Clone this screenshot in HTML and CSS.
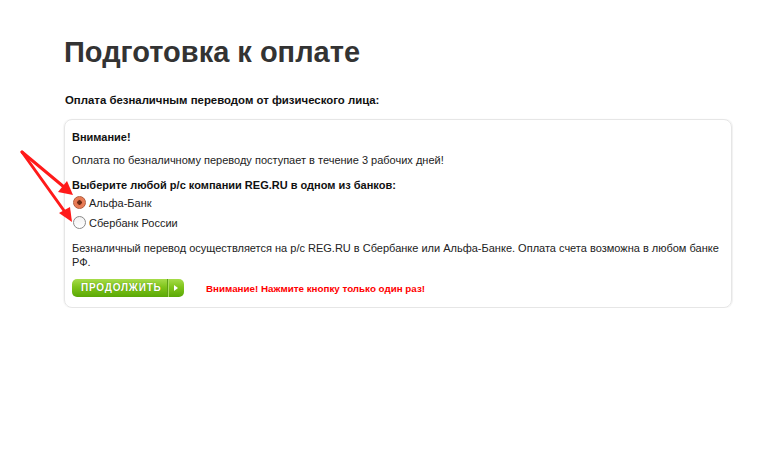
FILE: index.html
```html
<!DOCTYPE html>
<html lang="ru">
<head>
<meta charset="utf-8">
<link rel="stylesheet" href="styles.css">
</head>
<body>
<div class="page">
  <h1 class="title">Подготовка к оплате</h1>
  <p class="subtitle">Оплата безналичным переводом от физического лица:</p>
  <div class="box">
    <p class="strong first">Внимание!</p>
    <p class="text">Оплата по безналичному переводу поступает в течение 3 рабочих дней!</p>
    <p class="strong choose">Выберите любой р/с компании REG.RU в одном из банков:</p>
    <label class="opt"><span class="radio checked"></span><span>Альфа-Банк</span></label>
    <label class="opt"><span class="radio"></span><span>Сбербанк России</span></label>
    <p class="note">Безналичный перевод осуществляется на р/с REG.RU в Сбербанке или Альфа-Банке. Оплата счета возможна в любом банке РФ.</p>
    <div class="actions">
      <span class="btn"><span class="btn-label">ПРОДОЛЖИТЬ</span><span class="btn-arrow"></span></span>
      <span class="warn">Внимание! Нажмите кнопку только один раз!</span>
    </div>
  </div>
</div>
<svg class="arrows" width="100" height="240" viewBox="0 0 100 240">
  <g stroke="#ff1a1a" stroke-width="3" stroke-linecap="round">
    <line x1="22" y1="152" x2="64" y2="187"/>
    <line x1="22" y1="152" x2="65" y2="212"/>
  </g>
  <g fill="#ff1a1a">
    <polygon points="73,195 58,192 67,181"/>
    <polygon points="72,222 59,213 70,207"/>
  </g>
</svg>
</body>
</html>
```

FILE: styles.css
```css
html, body {
  margin: 0;
  padding: 0;
  background: #fff;
}
body {
  font-family: "Liberation Sans", Arial, sans-serif;
  color: #222;
  position: relative;
}
.page {
  padding: 34px 0 0 64px;
  width: 668px;
}
.title {
  margin: 0;
  font-size: 29px;
  line-height: 36px;
  font-weight: bold;
  color: #333;
}
.subtitle {
  margin: 22px 0 0 1px;
  font-size: 11.4px;
  line-height: 16px;
  font-weight: bold;
  color: #111;
}
.box {
  margin-top: 11px;
  border: 1px solid #e6e6e6;
  border-radius: 8px;
  box-shadow: 1px 0 1px rgba(0,0,0,0.06), -1px 0 1px rgba(0,0,0,0.04);
  padding: 9px 8px 10px 7px;
  font-size: 11px;
  color: #222;
}
.box p {
  margin: 0;
}
.strong {
  font-weight: bold;
  line-height: 16px;
  color: #111;
}
.text {
  margin-top: 7px !important;
  line-height: 16px;
}
.choose {
  margin-top: 9px !important;
}
.opt {
  display: flex;
  align-items: flex-start;
  height: 20px;
  line-height: 20px;
  gap: 3px;
}
.radio {
  width: 11px;
  height: 11px;
  margin-top: 3px;
  margin-left: 1px;
  border-radius: 50%;
  border: 1px solid #8a8a8a;
  background: linear-gradient(#f2f2f2, #fff);
  box-sizing: content-box;
  position: relative;
}
.radio.checked {
  border-color: #b0583a;
  background: radial-gradient(circle at 50% 50%, #6b2a14 0, #6b2a14 2px, #e4744e 2.5px, #f08a62 100%);
}
.note {
  margin-top: 8px !important;
  line-height: 14px;
}
.actions {
  margin-top: 10px;
  display: flex;
  align-items: center;
  gap: 22px;
}
.btn {
  display: flex;
  align-items: stretch;
  height: 18px;
  width: 112px;
  border-radius: 5px;
  background: linear-gradient(#a6dc4a 0%, #7fc41a 45%, #5aa806 100%);
  box-sizing: border-box;
}
.btn-label {
  flex: 0 0 96px;
  box-sizing: border-box;
  padding-left: 9px;
  line-height: 18px;
  font-size: 10px;
  font-weight: bold;
  letter-spacing: 0.8px;
  color: #fff;
  text-shadow: 0 0 1px rgba(40,90,0,0.6);
  border-right: 1px solid #5f9f16;
}
.btn-arrow {
  flex: 1;
  position: relative;
  border-left: 1px solid #a9dd60;
}
.btn-arrow::after {
  content: "";
  position: absolute;
  left: 5px;
  top: 6px;
  border-left: 4px solid #fff;
  border-top: 3px solid transparent;
  border-bottom: 3px solid transparent;
}
.warn {
  font-size: 9.8px;
  font-weight: bold;
  color: #ff0000;
}
.arrows {
  position: absolute;
  left: 0;
  top: 0;
}
```
